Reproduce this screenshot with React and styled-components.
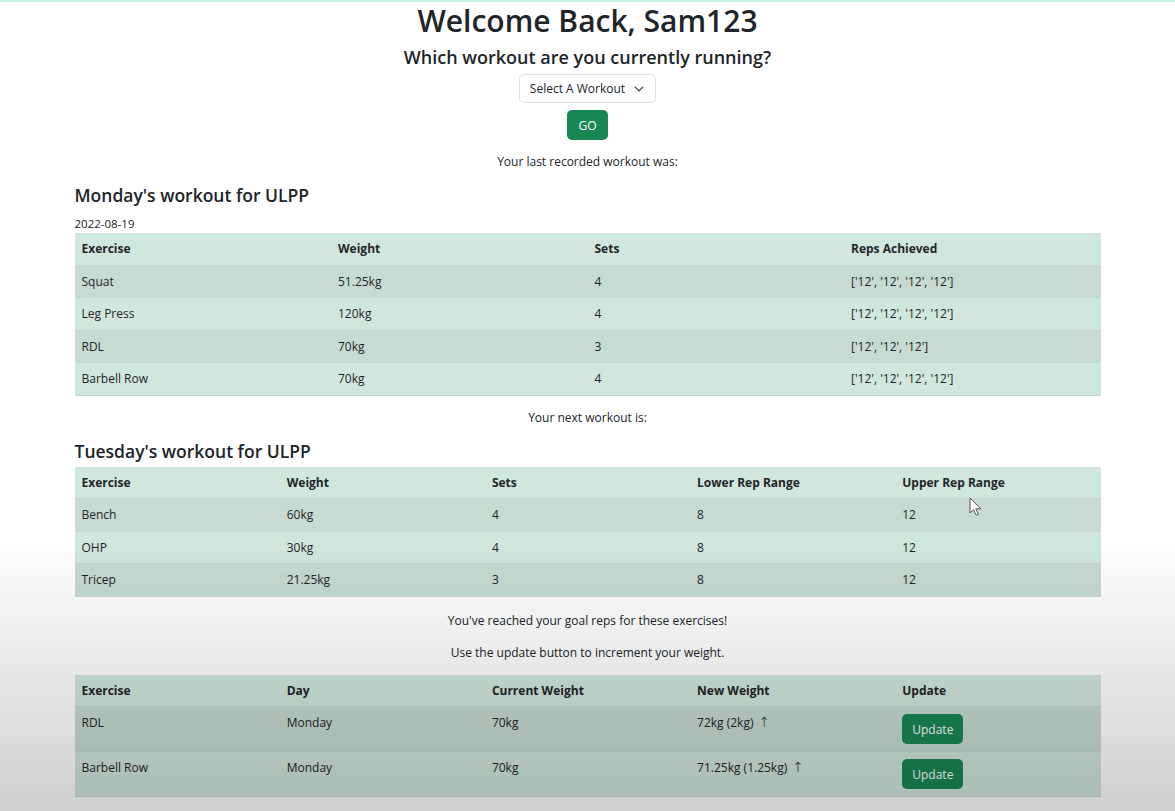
import React from "react";
import styled, { createGlobalStyle } from "styled-components";

const lastWorkout = [
    { exercise: "Squat", weight: "51.25kg", sets: 4, reps: "['12', '12', '12', '12']" },
    { exercise: "Leg Press", weight: "120kg", sets: 4, reps: "['12', '12', '12', '12']" },
    { exercise: "RDL", weight: "70kg", sets: 3, reps: "['12', '12', '12']" },
    { exercise: "Barbell Row", weight: "70kg", sets: 4, reps: "['12', '12', '12', '12']" },
];

const nextWorkout = [
    { exercise: "Bench", weight: "60kg", sets: 4, lower: 8, upper: 12 },
    { exercise: "OHP", weight: "30kg", sets: 4, lower: 8, upper: 12 },
    { exercise: "Tricep", weight: "21.25kg", sets: 3, lower: 8, upper: 12 },
];

const updates = [
    { exercise: "RDL", day: "Monday", current: "70kg", next: "72kg (2kg)" },
    { exercise: "Barbell Row", day: "Monday", current: "70kg", next: "71.25kg (1.25kg)" },
];

function App() {
    return (
        <>
            <GlobalStyle />
            <Page>
                <Title>Welcome Back, Sam123</Title>
                <Subtitle>Which workout are you currently running?</Subtitle>
                <SelectBox>
                    Select A Workout
                    <svg width="10" height="10" viewBox="0 0 16 16">
                        <path
                            d="M2 5l6 6 6-6"
                            fill="none"
                            stroke="#343a40"
                            strokeWidth="2"
                            strokeLinecap="round"
                            strokeLinejoin="round"
                        />
                    </svg>
                </SelectBox>
                <GreenButton $small>GO</GreenButton>

                <Note>Your last recorded workout was:</Note>
                <SectionTitle>Monday's workout for ULPP</SectionTitle>
                <DateLine>2022-08-19</DateLine>
                <Table>
                    <thead>
                        <tr>
                            <Th>Exercise</Th>
                            <Th>Weight</Th>
                            <Th>Sets</Th>
                            <Th>Reps Achieved</Th>
                        </tr>
                    </thead>
                    <tbody>
                        {lastWorkout.map((row) => (
                            <tr key={row.exercise}>
                                <Td>{row.exercise}</Td>
                                <Td>{row.weight}</Td>
                                <Td>{row.sets}</Td>
                                <Td>{row.reps}</Td>
                            </tr>
                        ))}
                    </tbody>
                </Table>

                <Note>Your next workout is:</Note>
                <SectionTitle $tight>Tuesday's workout for ULPP</SectionTitle>
                <TableWrap>
                    <Table>
                        <thead>
                            <tr>
                                <Th>Exercise</Th>
                                <Th>Weight</Th>
                                <Th>Sets</Th>
                                <Th>Lower Rep Range</Th>
                                <Th>Upper Rep Range</Th>
                            </tr>
                        </thead>
                        <tbody>
                            {nextWorkout.map((row) => (
                                <tr key={row.exercise}>
                                    <Td>{row.exercise}</Td>
                                    <Td>{row.weight}</Td>
                                    <Td>{row.sets}</Td>
                                    <Td>{row.lower}</Td>
                                    <Td>{row.upper}</Td>
                                </tr>
                            ))}
                        </tbody>
                    </Table>
                    <Cursor width="13" height="19" viewBox="0 0 13 19">
                        <path
                            d="M1 1v15l3.6-3.4 2.6 5.6 2.2-1-2.6-5.4H12z"
                            fill="#fff"
                            stroke="#555"
                            strokeWidth="1"
                            strokeLinejoin="round"
                        />
                    </Cursor>
                </TableWrap>

                <Note $wide>You've reached your goal reps for these exercises!</Note>
                <Note $flush>Use the update button to increment your weight.</Note>
                <Table>
                    <thead>
                        <tr>
                            <Th>Exercise</Th>
                            <Th>Day</Th>
                            <Th>Current Weight</Th>
                            <Th>New Weight</Th>
                            <Th>Update</Th>
                        </tr>
                    </thead>
                    <tbody>
                        {updates.map((row) => (
                            <tr key={row.exercise}>
                                <Td>{row.exercise}</Td>
                                <Td>{row.day}</Td>
                                <Td>{row.current}</Td>
                                <Td>
                                    {row.next} <Arrow>↑</Arrow>
                                </Td>
                                <Td>
                                    <GreenButton>Update</GreenButton>
                                </Td>
                            </tr>
                        ))}
                    </tbody>
                </Table>
            </Page>
            <Vignette />
        </>
    );
}

export default App;

const GlobalStyle = createGlobalStyle`
    * {
        box-sizing: border-box;
    }

    body {
        margin: 0;
        background: #fff;
        color: #212529;
        font-family: "Open Sans", "Noto Sans", sans-serif;
        font-size: 12px;
        border-top: 2px solid #c9f3e1;
    }
`;

const Page = styled.div`
    width: 1026px;
    margin: 0 auto;
    display: flex;
    flex-direction: column;
    align-items: center;
`;

const Title = styled.h1`
    margin: 0;
    font-size: 30px;
    font-weight: 600;
    line-height: 37px;
`;

const Subtitle = styled.h4`
    margin: 6px 0 0;
    font-size: 18px;
    font-weight: 600;
    line-height: 24px;
`;

const SelectBox = styled.div`
    margin-top: 5px;
    height: 29px;
    display: inline-flex;
    align-items: center;
    gap: 9px;
    padding: 0 11px 0 10px;
    border: 1px solid #dee2e6;
    border-radius: 5px;
    font-size: 12px;
    color: #212529;
    background: #fff;
`;

const GreenButton = styled.button`
    margin: ${(props) => (props.$small ? "7px 0 0" : "1px 0")};
    height: 30px;
    padding: 0 ${(props) => (props.$small ? "11px" : "10px")};
    border: none;
    border-radius: 5px;
    background-color: #198754;
    color: #fff;
    font-family: inherit;
    font-size: 12px;
    cursor: pointer;
`;

const Note = styled.p`
    margin: ${(props) =>
        props.$flush ? "0 0 13px" : props.$wide ? "14px 0 13px" : "12px 0 13px"};
    font-size: 12px;
    line-height: 19px;
    text-align: center;
`;

const SectionTitle = styled.h3`
    align-self: stretch;
    margin: 0 0 ${(props) => (props.$tight ? "4px" : "8px")};
    font-size: 17.5px;
    font-weight: 600;
    line-height: 23px;
`;

const DateLine = styled.div`
    align-self: stretch;
    font-size: 11.5px;
    line-height: 17px;
    margin-bottom: 1px;
`;

const TableWrap = styled.div`
    position: relative;
    align-self: stretch;
`;

const Table = styled.table`
    width: 100%;
    table-layout: fixed;
    border-collapse: collapse;
    background-color: #d1e7dd;
    color: #212529;

    tbody tr:nth-child(odd) {
        background-color: #c7dbd2;
    }
`;

const Th = styled.th`
    padding: 6px 7px;
    line-height: 19.5px;
    text-align: left;
    font-weight: 700;
    font-size: 12px;
    border-bottom: 1px solid #c3d8ce;
`;

const Td = styled.td`
    padding: 6px 7px;
    line-height: 19.5px;
    vertical-align: top;
    border-bottom: 1px solid #c3d8ce;
`;

const Arrow = styled.span`
    margin-left: 2px;
    font-family: "DejaVu Sans", sans-serif;
    font-size: 14px;
    font-weight: 300;
    line-height: 1;
`;

const Cursor = styled.svg`
    position: absolute;
    left: 894px;
    top: 30px;
`;

const Vignette = styled.div`
    position: fixed;
    inset: 0;
    pointer-events: none;
    background: linear-gradient(
        to bottom,
        rgba(0, 0, 0, 0) 0,
        rgba(0, 0, 0, 0) 540px,
        rgba(0, 0, 0, 0.19) 100%
    );
`;
